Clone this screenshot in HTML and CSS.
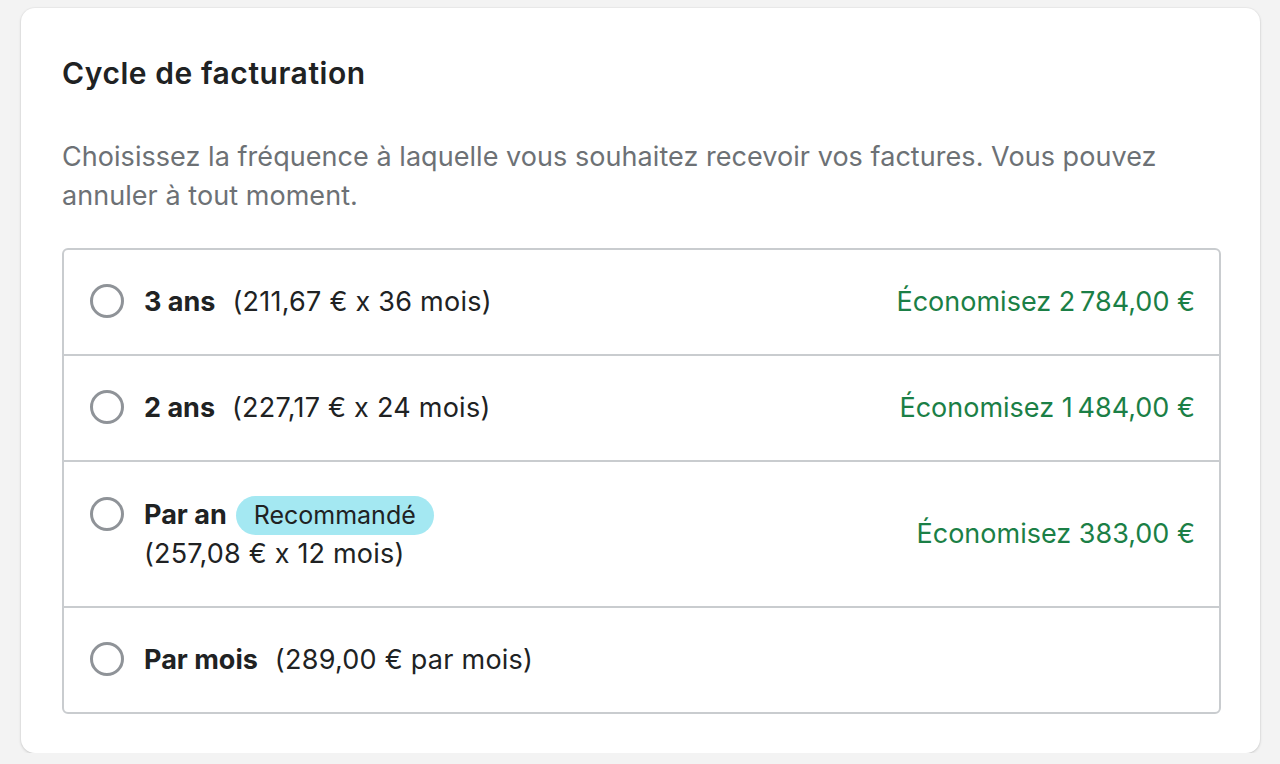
FILE: index.html
```html
<!DOCTYPE html>
<html lang="fr">
<head>
<meta charset="utf-8">
<link rel="stylesheet" href="styles.css">
</head>
<body>
<div class="card">
  <h2 class="title">Cycle de facturation</h2>
  <p class="desc">Choisissez la fréquence à laquelle vous souhaitez recevoir vos factures. Vous pouvez annuler à tout moment.</p>
  <div class="options">
    <label class="row">
      <span class="radio"></span>
      <span class="info"><span class="line"><b>3 ans</b><span class="price">(211,67 € x 36 mois)</span></span></span>
      <span class="save">Économisez 2&#8239;784,00 €</span>
    </label>
    <label class="row">
      <span class="radio"></span>
      <span class="info"><span class="line"><b>2 ans</b><span class="price">(227,17 € x 24 mois)</span></span></span>
      <span class="save">Économisez 1&#8239;484,00 €</span>
    </label>
    <label class="row row-tall">
      <span class="radio"></span>
      <span class="info">
        <span class="line"><b>Par an</b><span class="badge">Recommandé</span></span>
        <span class="line line-sub">(257,08 € x 12 mois)</span>
      </span>
      <span class="save">Économisez 383,00 €</span>
    </label>
    <label class="row">
      <span class="radio"></span>
      <span class="info"><span class="line"><b>Par mois</b><span class="price">(289,00 € par mois)</span></span></span>
    </label>
  </div>
</div>
</body>
</html>
```

FILE: styles.css
```css
html, body { margin: 0; padding: 0; }
body {
  background: #f3f3f3;
  font-family: Inter, "Noto Sans", sans-serif;
  color: #202223;
  padding: 8px 20px 0 21px;
}
.card {
  background: #fff;
  border-radius: 14px;
  box-shadow: 0 1px 3px rgba(0,0,0,0.16), 0 0 0 1px rgba(0,0,0,0.025);
  padding: 47px 39px 39px 41px;
}
.title {
  margin: 0;
  font-size: 30px;
  font-weight: 600;
  line-height: 36px;
  letter-spacing: 0.55px;
}
.desc {
  margin: 46px 0 0;
  font-size: 27px;
  line-height: 39px;
  color: #6d7175;
  letter-spacing: 0.05px;
}
.options {
  margin-top: 33px;
  border: 2px solid #c9cccf;
  border-radius: 6px;
}
.row {
  display: flex;
  align-items: center;
  padding: 32px 24px 32px 26px;
  font-size: 27px;
  line-height: 40px;
}
.row + .row { border-top: 2px solid #c9cccf; }
.row-tall { padding-top: 33px; padding-bottom: 33px; }
.radio {
  flex: none;
  box-sizing: border-box;
  width: 34px;
  height: 34px;
  border: 3.5px solid #8f9398;
  border-radius: 50%;
  margin-right: 20px;
  align-self: flex-start;
  margin-top: 2px;
}
.info { display: flex; flex-direction: column; flex: 1; }
.line { display: flex; align-items: center; height: 40px; }
.line-sub { height: 38px; line-height: 38px; letter-spacing: 0.2px; }
.line b { font-weight: 700; }
.price { margin-left: 17px; letter-spacing: 0.25px; }
.badge {
  margin-left: 9px;
  background: #a4e8f2;
  border-radius: 20px;
  padding: 0 18px;
  height: 39px;
  line-height: 39px;
  font-size: 25px;
}
.save { color: #1b7f46; }
```
